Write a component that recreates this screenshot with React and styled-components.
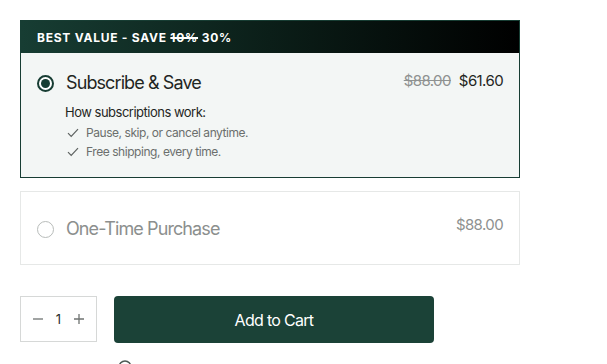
import React, { useState } from 'react'
import styled, { createGlobalStyle } from 'styled-components'

const GlobalStyle = createGlobalStyle`
  * { box-sizing: border-box; }
  body {
    margin: 0;
    background: #fff;
    font-family: Inter, "Liberation Sans", sans-serif;
    color: #1f2623;
  }
`

const Page = styled.div`
  padding: 20px;
  width: 540px;
  display: flex;
  flex-direction: column;
`

const Option = styled.div`
  border: 1px solid ${p => (p.$active ? '#173d33' : '#e6e8e7')};
  background: ${p => (p.$active ? '#f3f6f5' : '#fff')};
  margin-bottom: 13px;
  cursor: pointer;
`

const Banner = styled.div`
  height: 32px;
  padding-left: 16px;
  display: flex;
  align-items: center;
  background: linear-gradient(90deg, #173d33 0%, #0b1e18 50%, #000 100%);
  color: #fff;
  font-size: 12px;
  font-weight: 700;
  letter-spacing: 0.75px;
  s { text-decoration-thickness: 1.5px; }
`

const OptionBody = styled.div`
  padding: ${p => (p.$compact ? '0 16px' : '19px 16px 16px 16px')};
  height: ${p => (p.$compact ? '72px' : 'auto')};
  display: flex;
  flex-direction: column;
  justify-content: center;
`

const TopRow = styled.div`
  display: flex;
  align-items: center;
  gap: 12px;
`

const Radio = styled.span`
  width: 17px;
  height: 17px;
  border-radius: 50%;
  flex: none;
  border: ${p => (p.$checked ? '2px solid #173d33' : '1px solid #b8bcba')};
  background: #fff;
  display: flex;
  align-items: center;
  justify-content: center;
  margin-top: 2px;
  &::after {
    content: '';
    display: ${p => (p.$checked ? 'block' : 'none')};
    width: 9px;
    height: 9px;
    border-radius: 50%;
    background: #173d33;
  }
`

const Title = styled.span`
  flex: 1;
  font-size: 18px;
  letter-spacing: -0.9px;
  color: ${p => (p.$muted ? '#8c8f8e' : '#1f2623')};
`

const Prices = styled.span`
  display: flex;
  gap: 8px;
  font-size: 15px;
  letter-spacing: -0.6px;
  align-self: flex-start;
  margin-top: ${p => (p.$compact ? '-3px' : '-1px')};
`

const Price = styled.span`
  color: ${p => (p.$muted ? '#8e9190' : '#1f2623')};
  text-decoration: ${p => (p.$struck ? 'line-through' : 'none')};
`

const Details = styled.div`
  padding-left: 28px;
  margin-top: 11px;
`

const DetailsHead = styled.div`
  font-size: 13px;
  letter-spacing: -0.5px;
  color: #1f2623;
  margin-bottom: 3px;
`

const Perk = styled.div`
  display: flex;
  align-items: center;
  gap: 7px;
  font-size: 12px;
  letter-spacing: -0.45px;
  color: #6b6f6d;
  line-height: 19px;
  padding-left: 2px;
`

const Buy = styled.div`
  display: flex;
  gap: 17px;
  margin-top: 18px;
`

const Qty = styled.div`
  width: 77px;
  height: 46px;
  border: 1px solid #d6d8d7;
  display: flex;
  align-items: center;
  justify-content: space-between;
  padding: 0 10px;
`

const QtyBtn = styled.button`
  border: 0;
  background: none;
  padding: 0;
  width: 14px;
  height: 14px;
  display: flex;
  align-items: center;
  justify-content: center;
  color: #6f7371;
  cursor: pointer;
`

const QtyValue = styled.span`
  font-size: 13px;
  color: #2a2f2d;
`

const CartButton = styled.button`
  width: 320px;
  height: 47px;
  border: 0;
  border-radius: 4px;
  background: #1b4237;
  color: #fff;
  font-family: inherit;
  font-size: 16px;
  letter-spacing: -0.7px;
  cursor: pointer;
`

const Note = styled.div`
  margin: 16px 0 0 98px;
  display: flex;
  align-items: center;
  height: 16px;
`

const Check = () => (
  <svg width="12" height="10" viewBox="0 0 12 10" fill="none" stroke="#5d6260" strokeWidth="1.2">
    <path d="M1 5.2 L4.2 8.5 L11 1.2" />
  </svg>
)

export default function App() {
  const [plan, setPlan] = useState('sub')
  const [qty, setQty] = useState(1)
  return (
    <>
      <GlobalStyle />
      <Page>
        <Option $active={plan === 'sub'} onClick={() => setPlan('sub')}>
          <Banner>BEST VALUE - SAVE&nbsp;<s>10%</s>&nbsp;30%</Banner>
          <OptionBody>
            <TopRow>
              <Radio $checked={plan === 'sub'} />
              <Title>Subscribe &amp; Save</Title>
              <Prices>
                <Price $muted $struck>$88.00</Price>
                <Price>$61.60</Price>
              </Prices>
            </TopRow>
            <Details>
              <DetailsHead>How subscriptions work:</DetailsHead>
              <Perk><Check />Pause, skip, or cancel anytime.</Perk>
              <Perk><Check />Free shipping, every time.</Perk>
            </Details>
          </OptionBody>
        </Option>
        <Option $active={plan === 'once'} onClick={() => setPlan('once')}>
          <OptionBody $compact>
            <TopRow>
              <Radio $checked={plan === 'once'} />
              <Title $muted>One-Time Purchase</Title>
              <Prices $compact>
                <Price $muted>$88.00</Price>
              </Prices>
            </TopRow>
          </OptionBody>
        </Option>
        <Buy>
          <Qty>
            <QtyBtn onClick={() => setQty(Math.max(1, qty - 1))}>
              <svg width="12" height="12" viewBox="0 0 12 12" stroke="currentColor" strokeWidth="1.3"><path d="M1 6h10" /></svg>
            </QtyBtn>
            <QtyValue>{qty}</QtyValue>
            <QtyBtn onClick={() => setQty(qty + 1)}>
              <svg width="12" height="12" viewBox="0 0 12 12" stroke="currentColor" strokeWidth="1.3"><path d="M1 6h10M6 1v10" /></svg>
            </QtyBtn>
          </Qty>
          <CartButton>Add to Cart</CartButton>
        </Buy>
        <Note>
          <svg width="14" height="14" viewBox="0 0 14 14" fill="none" stroke="#4d5a55" strokeWidth="1.6">
            <circle cx="7" cy="7" r="6" />
          </svg>
        </Note>
      </Page>
    </>
  )
}
